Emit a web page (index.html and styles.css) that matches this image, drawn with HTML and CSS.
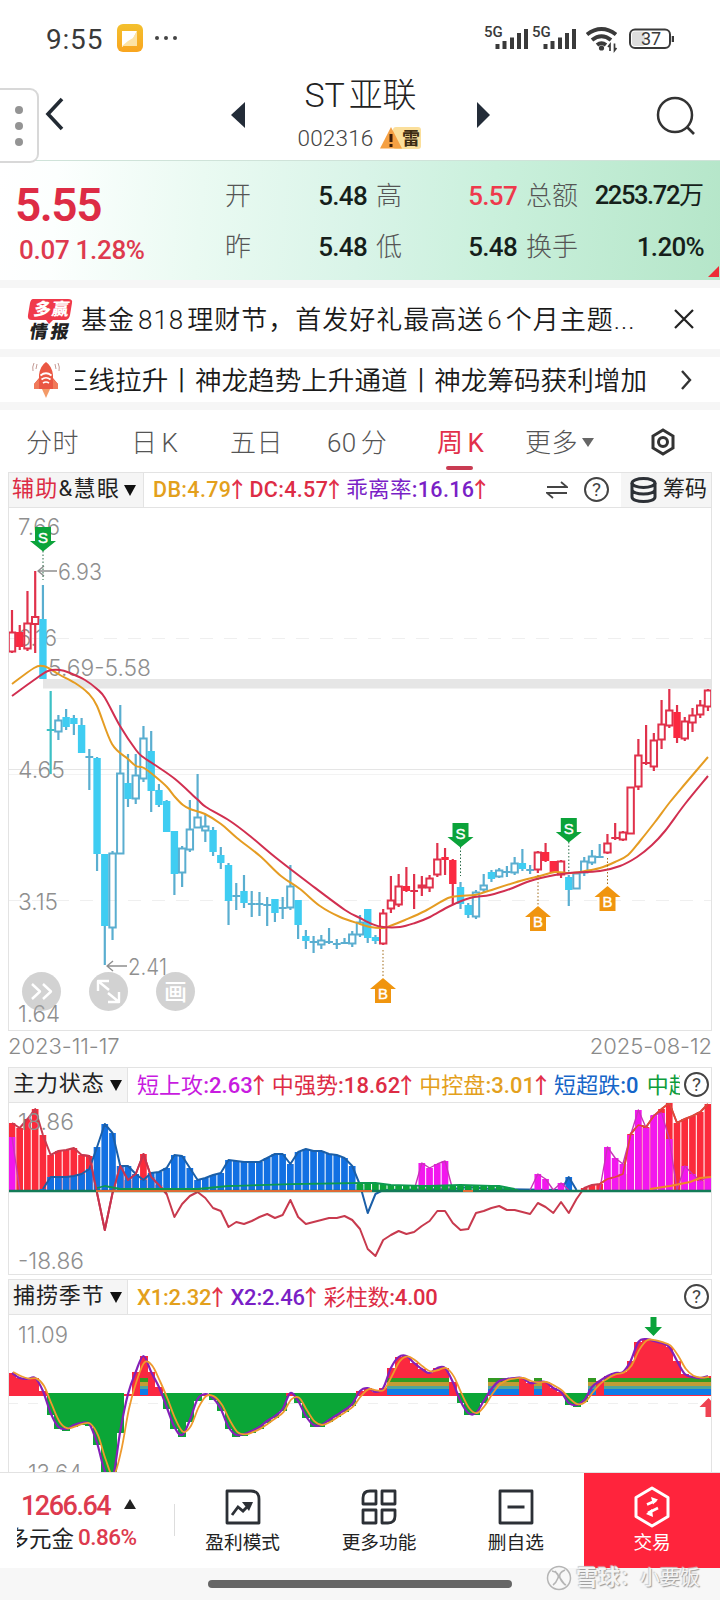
FILE: index.html
```html
<!DOCTYPE html>
<html lang="zh-CN">
<head>
<meta charset="utf-8">
<title>ST亚联 002316</title>
<link rel="stylesheet" href="styles.css">
</head>
<body>
<div class="screen">
  <div class="status">
    <span class="clock">9:55</span>
    <svg class="app-badge" width="26" height="28" viewBox="0 0 26 28"><defs><linearGradient id="ab" x1="0" y1="0" x2="0" y2="1"><stop offset="0" stop-color="#f3c02e"/><stop offset="1" stop-color="#f9a51f"/></linearGradient></defs><rect width="26" height="28" rx="6" fill="url(#ab)"/><path d="M5 7h15l-4 8-4 3-7 5z" fill="#fff"/><path d="M20 7v15H5l6-5 5-3z" fill="#fde3a4"/></svg>
    <span class="dots"><i></i><i></i><i></i></span>
    <svg class="sig" width="190" height="32" viewBox="484 22 190 32">
      <g fill="#3a3a3a"><text x="484" y="37" class="g5">5G</text><text x="532" y="37" class="g5">5G</text>
      <path d="M495.500 44h4v5h-4zM502.500 41h4v8h-4zM510 37.500h4v11.500h-4zM517 33h4v16h-4zM524 29h4v20h-4z"/>
      <path d="M543.500 44h4v5h-4zM550.500 41h4v8h-4zM558 37.500h4v11.500h-4zM565 33h4v16h-4zM572 29h4v20h-4z"/></g>
      <g fill="none" stroke="#3a3a3a" stroke-width="4"><path d="M587 34.500q14.500-11 29 0"/><path d="M592 40q9.500-7.500 19 0"/><path d="M597 45q4.500-3.500 9 0"/></g>
      <circle cx="601.500" cy="48" r="2.600" fill="#3a3a3a"/><path d="M610 51v-6.500l-2 2.500M614.500 43.500v7l2-2.500" fill="none" stroke="#3a3a3a" stroke-width="1.700"/>
      <rect x="630" y="29.500" width="40" height="18.500" rx="5" fill="#fff" stroke="#3a3a3a" stroke-width="2"/><rect x="632" y="31.500" width="13" height="14.500" rx="3" fill="#ddd"/><path d="M673 36v6" stroke="#3a3a3a" stroke-width="2.500"/>
      <text x="651" y="45" text-anchor="middle" class="bat">37</text>
    </svg>
  </div>

  <header class="head">
    <div class="side-tab"><i></i><i></i><i></i></div>
    <svg class="back" width="20" height="34" viewBox="0 0 20 34"><path d="M17 2L3 17l14 15" fill="none" stroke="#222a33" stroke-width="3.600"/></svg>
    <svg class="prev" width="14" height="26" viewBox="0 0 14 26"><path d="M14 0v26L0 13z" fill="#232c38"/></svg>
    <div class="name"><div class="title">ST<span>亚联</span></div>
      <div class="code"><span>002316</span><svg width="43" height="24" viewBox="0 0 43 24"><rect x="14" y="1" width="28" height="22" rx="3" fill="#fbdf9b"/><path d="M12 1L23 22.500H1z" fill="#f5a043"/><path d="M12 8v8M12 18v3" stroke="#3b1c08" stroke-width="3"/><text x="23" y="18.500" class="lei">雷</text></svg></div></div>
    <svg class="next" width="14" height="26" viewBox="0 0 14 26"><path d="M0 0v26l13-13z" fill="#232c38"/></svg>
    <svg class="search" width="42" height="42" viewBox="0 0 42 42"><circle cx="19" cy="19" r="17" fill="none" stroke="#333" stroke-width="2.500"/><path d="M31 31l7 7" stroke="#333" stroke-width="2.700"/></svg>
  </header>

  <section class="quote">
    <div class="price"><b>5.55</b><span>0.07 1.28%</span></div>
    <div class="stats">
      <em>开</em><b>5.48</b><em>高</em><b class="up">5.57</b><em>总额</em><b class="wide">2253.72<u>万</u></b>
      <em>昨</em><b>5.48</b><em>低</em><b>5.48</b><em>换手</em><b>1.20%</b>
    </div>
    <div class="corner"></div>
  </section>

  <div class="notice ad">
    <svg width="47" height="44" viewBox="26 294 47 44"><path d="M33 296h35q5 0 4 4l-2 12q-1 5-5 5H53l-4 4-3-4H32q-5 0-4-5l2-12q1-4 3-4z" fill="#f0394b"/><g transform="translate(57 0) skewX(-10)"><text x="31" y="312.500" class="lg1" textLength="35">多赢</text><text x="31" y="335.500" class="lg2" textLength="39">情报</text></g></svg>
    <div class="txt">基金<u>818</u>理财节，首发好礼最高送<u>6</u>个月主题...</div>
    <svg width="20" height="20" viewBox="0 0 20 20"><path d="M1 1l18 18M19 1L1 19" stroke="#222" stroke-width="2.200"/></svg>
  </div>
  <div class="notice strat">
    <svg width="28" height="36" viewBox="0 0 28 36"><path d="M14 0q6 4 7 13v3l5 6v5h-6H8H2v-5l5-6v-3q1-9 7-13z" fill="#ea5743"/><path d="M2 22l5-5v10H2zM26 22l-5-5v10h5z" fill="#f07a5a"/><path d="M10 27h8l-4 9z" fill="#f39a68"/><path d="M8.500 13.500q5.500-4.500 11 0M9.500 17.500q4.500-3.500 9 0M11 21q3-2 6 0" fill="none" stroke="#fff" stroke-width="1.700"/><path d="M2 1q-2 4-1 8M26 1q2 4 1 8M5 2l-1 5M23 2l1 5" stroke="#c49a94" fill="none"/></svg>
    <div class="txt clip"><span>三线拉升丨神龙趋势上升通道丨神龙筹码获利增加</span></div>
    <svg width="12" height="20" viewBox="0 0 12 20"><path d="M2 1l8 9-8 9" fill="none" stroke="#333" stroke-width="2.400"/></svg>
  </div>

  <nav class="tabs">
    <span>分时</span><span>日<u>K</u></span><span>五日</span><span>60<u>分</u></span><span class="on">周<u>K</u></span><span>更多<i></i></span>
    <svg width="26" height="28" viewBox="0 0 26 28"><path d="M13 2l10 6v12l-10 6-10-6V8z" fill="none" stroke="#333" stroke-width="3"/><circle cx="13" cy="14" r="4.500" fill="none" stroke="#333" stroke-width="3"/></svg>
  </nav>

  <main class="charts">
    <div class="bar b1">
      <div class="pick"><span class="r">辅助</span>&amp;慧眼<i></i></div>
      <div class="vals"><span class="o">DB:4.79<s>↑</s></span><span class="r">DC:4.57<s>↑</s></span><span class="p"><u>乖离率</u>:16.16<s>↑</s></span></div>
      <svg class="swap" width="22" height="18" viewBox="0 0 22 18"><path d="M1 6h20l-6-5M21 12H1l6 5" fill="none" stroke="#444" stroke-width="1.800"/></svg>
      <span class="help">?</span>
      <div class="chips"><svg width="27" height="26" viewBox="0 0 27 26"><g fill="none" stroke="#2c3036" stroke-width="3"><ellipse cx="13.500" cy="6" rx="11.500" ry="4.500"/><path d="M2 6v14c0 6 23 6 23 0V6M2 12.500c0 6 23 6 23 0"/></g></svg><span>筹码</span></div>
    </div>
    <svg id="kline" width="704" height="523" viewBox="8 508 704 523"></svg>
    <div class="dates"><span>2023-11-17</span><span>2025-08-12</span></div>
    <div class="bar b2">
      <div class="pick"><span>主力状态</span><i></i></div>
      <div class="vals"><span class="m"><u>短上攻</u>:2.63<s>↑</s></span><span class="r"><u>中强势</u>:18.62<s>↑</s></span><span class="o"><u>中控盘</u>:3.01<s>↑</s></span><span class="b"><u>短超跌</u>:0</span><span class="g"><u>中超</u></span></div>
      <span class="help">?</span>
    </div>
    <svg id="force" width="704" height="172" viewBox="8 1102 704 172"></svg>
    <div class="bar b3">
      <div class="pick"><span>捕捞季节</span><i></i></div>
      <div class="vals"><span class="o">X1:2.32<s>↑</s></span><span class="p">X2:2.46<s>↑</s></span><span class="r"><u>彩柱数</u>:4.00</span></div>
      <span class="help">?</span>
    </div>
    <svg id="season" width="704" height="158" viewBox="8 1314 704 158"></svg>
  </main>

  <footer class="foot">
    <div class="index"><div><b>1266.64</b><i></i></div><div class="ix"><span><u>多元金</u></span><em>0.86%</em></div></div>
    <div class="act"><svg width="36" height="36" viewBox="0 0 36 36"><path d="M2 2h24q8 0 8 8v24H2z" fill="none" stroke="#2c3036" stroke-width="2.800" stroke-linejoin="round"/><path d="M7 26l6-8 5 4 6-6" fill="none" stroke="#2c3036" stroke-width="2.800"/><path d="M17 13h11l-4 9z" fill="#2c3036"/></svg>盈利模式</div>
    <div class="act"><svg width="36" height="36" viewBox="0 0 36 36"><g fill="none" stroke="#2c3036" stroke-width="2.800" stroke-linejoin="round"><path d="M15 2v13H2v-6q0-7 7-7zM21 2h13v13H21zM2 21h13v13H2zM21 21h13v6q0 7-7 7h-6z"/></g></svg>更多功能</div>
    <div class="act"><svg width="36" height="36" viewBox="0 0 36 36"><path d="M2 2h32v32H2zM9.500 18h17" fill="none" stroke="#2c3036" stroke-width="2.800" stroke-linejoin="round"/></svg>删自选</div>
    <div class="trade"><svg width="38" height="42" viewBox="0 0 38 42"><path d="M19 2l16 9.500v19L19 40 3 30.500v-19z" fill="none" stroke="#fff" stroke-width="3" stroke-linejoin="round"/><path d="M14 18.500l9-4M25 22l-10 5" fill="none" stroke="#fff" stroke-width="2.600"/><path d="M18 11l7 2.500-5 5zM20 31l-7-3 6-5z" fill="#fff"/></svg>交易</div>
  </footer>
  <div class="home"><i></i>
    <div class="mark"><svg width="26" height="26" viewBox="0 0 26 26"><circle cx="13" cy="13" r="11.500" fill="#f8f8f8" stroke="#b5b5b5" stroke-width="1.500"/><path d="M6 6q8 2 6 7t-5 7M19 5q-7 3-5 8t6 7M9 6l10 14" fill="none" stroke="#b5b5b5" stroke-width="1.600"/></svg><b>雪球</b><span>：小要饭</span></div>
  </div>
</div>
<script src="charts.js"></script>
</body>
</html>
```

FILE: styles.css
```css
* { box-sizing: border-box; }
body { margin: 0; background: #fff; font-family: Roboto, "Noto Sans CJK SC", sans-serif; color: #222; }
i, em { font-style: normal; }
s, u { text-decoration: none; }
svg { display: block; flex: none; }
.screen { width: 720px; height: 1600px; overflow: hidden; display: flex; flex-direction: column; }
.screen > * { flex: none; }

.status { height: 76px; padding: 0 46px; display: flex; align-items: center; }
.clock { font-size: 28px; width: 71px; color: #3a3a3a; letter-spacing: .8px; margin-top: 2px; }
.dots { display: flex; gap: 5px; margin-left: 12px; }
.dots i { width: 4px; height: 4px; border-radius: 50%; background: #444; }
.sig { margin-left: auto; }
.g5 { font: 500 15px Roboto; }
.bat { font: 400 18px Roboto; fill: #3a3a3a; }

.head { height: 84px; display: flex; align-items: flex-start; position: relative; }
.side-tab { width: 39px; height: 75px; margin-top: 12px; border: 2px solid #d8d8d8; border-left: 0; border-radius: 0 9px 9px 0; display: flex; flex-direction: column; align-items: center; justify-content: center; gap: 8px; position: relative; z-index: 2; background: #fff; }
.side-tab i { width: 8px; height: 8px; border-radius: 50%; background: #949494; }
.back { margin: 21px 0 0 6px; }
.prev { margin: 26px 0 0 166px; }
.name { width: 232px; display: flex; flex-direction: column; align-items: center; padding-right: 3px; }
.title { font-size: 34px; line-height: 40px; font-weight: 300; color: #222; margin: -1px 0 0 2px; display: flex; gap: 4px; letter-spacing: -.1px; }
.code { display: flex; align-items: center; margin-top: 11px; height: 24px; gap: 5px; font-size: 22.500px; color: #444; font-weight: 300; letter-spacing: .2px; }
.lei { font: 700 18px "Noto Sans CJK SC"; fill: #3d2b12; letter-spacing: 0; }
.next { margin-top: 26px; }
.search { margin: 20px 0 0 165px; }

.quote { height: 120px; position: relative; display: flex; background: linear-gradient(95deg, #fff 0, #fcfffe 8%, #eafaf2 28%, #d9f4e8 50%, #caf0dc 68%, #b5e6c9 100%); border-top: 1px solid #cfe3d9; }
.price { width: 225px; padding: 18px 0 0 15px; color: #dd2c45; }
.price b { display: block; font-size: 46px; line-height: 52px; letter-spacing: -1.500px; font-weight: 600; }
.price span { display: block; margin: 3px 0 0 4px; font-size: 26px; line-height: 32px; font-weight: 500; letter-spacing: -.3px; color: #de3a4e; }
.stats { width: 479px; display: grid; grid-template-columns: 60px 82px 60px 90px 62px 125px; grid-template-rows: 51px 51px; align-items: center; margin-top: 9px; height: 102px; }
.stats em { font-size: 26px; font-weight: 300; color: #555; line-height: 30px; padding-left: 9px; white-space: nowrap; }
.stats em:nth-of-type(6n+1), .stats em:nth-of-type(6n+4) { padding-left: 0; }
.stats b { font-size: 26px; font-weight: 500; text-align: right; line-height: 30px; letter-spacing: -.7px; color: #161f1b; }
.stats .wide { font-size: 25.500px; letter-spacing: -1.400px; }
.stats b u { font-weight: 400; font-size: 25px; letter-spacing: 0; }
.stats .up { color: #ee3a4c; }
.corner { position: absolute; right: 1px; bottom: 3px; border-left: 11px solid transparent; border-bottom: 11px solid #ee2b36; }

.notice { display: flex; align-items: center; border-top: 8px solid #f6f6f6; }
.ad { height: 69px; padding: 0 26px; }
.strat { height: 53px; padding: 0 28px 0 32px; }
.notice .txt { flex: 1; font-size: 26px; line-height: 38px; white-space: nowrap; color: #1a1a1a; font-weight: 350; padding-top: 2px; }
.ad .txt { margin-left: 8px; letter-spacing: 1px; }
.ad u { margin: 0 3px; }
.lg1 { font: 900 17px "Noto Sans CJK SC"; fill: #fff; }
.lg2 { font: 900 18px "Noto Sans CJK SC"; fill: #222; }
.clip { margin: 0 33px 0 15px; overflow: hidden; display: flex; justify-content: flex-end; }
.clip span { font-size: 26.600px; }

.tabs { height: 70px; border-top: 8px solid #f6f6f6; display: grid; grid-template-columns: 105px 99px 97px 110px 88px 125px 40px; padding-left: 26px; font-size: 26px; line-height: 38px; font-weight: 300; color: #555; align-items: start; letter-spacing: .4px; }
.tabs > span { padding-top: 14px; height: 60px; white-space: nowrap; }
.tabs u { margin-left: 4px; }
.tabs > svg { margin-top: 18px; }
.tabs .on { color: #e2304a; font-weight: 400; }
.on::after { content: ""; display: block; width: 27px; height: 4px; border-radius: 2px; background: #c93b52; margin: 4px 0 0 9px; }
.tabs i { display: inline-block; border: 6px solid transparent; border-top: 9px solid #666; border-bottom: 0; margin-left: 4px; vertical-align: 5px; }

.charts { width: 704px; margin-left: 8px; height: 1000px; overflow: hidden; }
.bar { display: flex; align-items: center; border: 1px solid #e3e3e3; font-size: 22px; height: 36px; line-height: 32px; overflow: hidden; white-space: nowrap; }
.pick { height: 100%; background: #f5f5f5; border-right: 1px solid #e3e3e3; display: flex; align-items: center; padding: 0 0 2px 4px; width: 119px; flex: none; letter-spacing: .9px; }
.b1 .pick { width: 135px; padding-left: 3px; letter-spacing: 1.300px; }
.pick i { border: 6.500px solid transparent; border-top: 11px solid #111; border-bottom: 0; margin: 2px 0 0 5px; }
.b1 .pick i { margin-left: 4px; }
.vals { flex: 1; display: flex; align-items: baseline; gap: 8px; padding: 0 0 2px 9px; overflow: hidden; letter-spacing: .05px; }
.b1 .vals { font-size: 21.500px; letter-spacing: .35px; }
.vals s { color: #e2304a; font-family: "Noto Sans CJK SC"; display: inline-block; width: 11px; text-indent: -5px; }
.b1 .vals s { width: 10px; }
.b2 .vals { margin-right: 4px; }
.b3 { margin-top: 4px; }
.b3 .vals { letter-spacing: -.2px; }
.r { color: #dd2c45; } .o { color: #e3a01c; } .p { color: #7a1fc6; } .m { color: #c81be0; } .b { color: #1565c8; } .g { color: #0d9c3c; }
.vals span { font-weight: 500; flex: none; }
.vals u { font-weight: 400; }
.help { width: 25px; height: 25px; border: 2px solid #444; border-radius: 50%; text-align: center; font: 400 19px/21px Roboto; color: #444; flex: none; margin: -1px 2px 0 0; }
.swap { margin-right: 16px; }
.chips { width: 90px; height: 100%; margin-left: 10px; background: #f5f5f5; display: flex; align-items: center; gap: 6px; padding-left: 9px; flex: none; }
.chips span { padding-bottom: 2px; }
.dates { height: 36px; display: flex; justify-content: space-between; font: 300 22px/31px Inter; color: #8a8a8a; letter-spacing: -.05px; }
.axis { font: 300 22.500px Inter; fill: #8f8f8f; }
.tag { font: 400 15px "Liberation Sans"; fill: #fff; stroke: #fff; stroke-width: .4px; text-anchor: middle; }
.glyph { font: 500 23px "Noto Sans CJK SC"; fill: #fff; text-anchor: middle; }

.foot { height: 96px; border-top: 1px solid #e2e2e2; display: flex; font-size: 18.700px; }
.index { width: 175px; padding: 17px 0 0 17px; position: relative; white-space: nowrap; }
.index::after { content: ""; position: absolute; right: 0; top: 31px; width: 1px; height: 32px; background: #ddd; }
.index div { display: flex; align-items: center; height: 32px; }
.index b { font-size: 27px; font-weight: 500; color: #dd3a4e; margin-left: 4px; letter-spacing: -1.500px; width: 103px; }
.index i { border: 6px solid transparent; border-bottom: 10px solid #222; border-top: 0; margin-bottom: 4px; }
.ix span { width: 57px; overflow: hidden; display: flex; justify-content: flex-end; font-size: 22.500px; line-height: 32px; }
.ix u { flex: none; }
.index .ix em { color: #dd3a4e; font-size: 22.500px; font-weight: 500; margin: -2px 0 0 4px; letter-spacing: -.5px; }
.ix span { margin-top: 2px; }
.act, .trade { display: flex; flex-direction: column; align-items: center; line-height: 28px; width: 137px; padding-top: 16px; }
.act svg { margin-bottom: 4px; }
.act:nth-child(2) { width: 136px; }
.trade { width: 136px; background: #ff243c; color: #fff; padding-top: 13px; }
.trade svg { margin-bottom: 1px; }
.home { height: 32px; background: #f7f7f7; position: relative; }
.home > i { position: absolute; left: 208px; top: 12px; width: 304px; height: 8px; border-radius: 4px; background: #666; }
.mark { position: absolute; left: 546px; top: -6px; display: flex; align-items: center; gap: 4px; font-size: 20px; line-height: 32px; color: #f4f4f4; text-shadow: 1px 1px 1px #999, -1px -1px 1px #ccc; white-space: nowrap; }
.mark b { font-size: 22px; }
.mark span { margin-left: -4px; }
```

FILE: charts.js
```js
const STEP = 7.733;
const X = i => 12 + STEP * i;
const RED = '#e0314b', RFILL = '#fb2840', BLUE = '#5aaed0', BFILL = '#3fcdf2';
const rect = (x, y, w, h, f) => `<rect x="${x}" y="${y}" width="${w}" height="${h}" fill="${f}"/>`;
const text = (x, y, t, w, c = 'axis') => `<text x="${x}" y="${y}" class="${c}"${w ? ` textLength="${w}" lengthAdjust="spacingAndGlyphs"` : ''}>${t}</text>`;

function smooth(p) {
  let d = `M${p[0][0]} ${p[0][1]}`;
  for (let i = 0; i < p.length - 1; i++) {
    const a = p[i - 1] || p[i], b = p[i], c = p[i + 1], e = p[i + 2] || c;
    d += `C${b[0] + (c[0] - a[0]) / 6} ${b[1] + (c[1] - a[1]) / 6} ${c[0] - (e[0] - b[0]) / 6} ${c[1] - (e[1] - b[1]) / 6} ${c[0]} ${c[1]}`;
  }
  return d;
}
const stroke = (d, c, w = 2) => `<path d="${d}" fill="none" stroke="${c}" stroke-width="${w}" stroke-linejoin="round"/>`;
const frame = (y, h) => `<rect x="8.500" y="${y}" width="703" height="${h}" fill="none" stroke="#e3e3e3"/>`;
const pairs = s => s.split(' ').map(v => v.split(',').map(Number));

/* kind, high, body top, body bottom, low; r/b hollow, R/B solid, x/y cross */
const candles = `r 610 632 652 653;R 625 632 647 650;r 591 623 649 651;r 571 616.5 624.5 653;B 585 619 679 679;y 691 730 730 774;b 715 720 732 740;B 709 717 727 730;B 715 718 724 735;B 718 725 753 753;y 749 757 757 790;B 757 758 854 871;B 854 854 926 965;b 851 853 928 940;b 705 773 854 854;B 754 783 799 807;b 754 775 799 804;b 726 738 779 782;B 731 751 791 812;B 784 790 805 807;B 800 801 832 832;B 831 831 874 895;b 846 848 873 887;b 800 829 850 852;b 774 817 828 828;b 815 826 831 842;B 827 830 852 856;B 847 855 863 869;B 863 865 901 925;y 883 896 896 910;B 875 891 903 908;y 891 904 904 917;y 892 904 904 916;y 897 905 905 926;B 899 899 913 922;y 897 908 908 919;b 865 886 908 910;B 900 900 925 939;B 930 936 941 949;y 936 942 942 953;b 935 940 945 949;y 928 942 942 944;y 939 944 944 949;y 938 943 943 944;b 931 934 944 947;b 915 922 935 937;B 909 909 938 943;B 935 937 941 944;r 909 913 944 945;r 876 900 909 913;r 874 886 905 907;R 867 886 891 892;x 874 891 891 909;r 876 885 888 896;r 875 878 888 892;r 843 859 875 877;R 848 857 860 875;R 859 860 884 904;B 882 887 904 909;B 903 905 915 918;b 890 892 917 919;b 874 885 890 893;B 870 872 879 882;b 868 870 877 878;y 866 872 872 877;b 857 863 873 875;B 849 863 869 871;y 865 870 870 874;r 851 852 870 873;R 843 852 861 862;R 861 861 873 873;r 860 861 875 878;B 875 877 890 906;b 872 873 889 889;b 857 861 873 876;b 850 856 863 865;y 844 857 857 858;r 834 843 853 854;x 823 838 838 840;r 831 832 840 841;r 787 787 834 834;r 739 755 787 790;x 725 763 763 765;r 733 740 767 771;r 700 724 740 749;r 689 710 726 728;R 705 712 738 743;r 717 721 739 741;r 708 715 723 732;r 700 705 715 718;r 689 690 707 711`.split(';').map(v => v.split(' '));

function drawKline() {
  let s = `<path d="M8 638.500H711M8 900.500H711" stroke="#efefef" stroke-dasharray="13 11"/><path d="M8 769.500H711" stroke="#e5e5e5"/><path d="M8 774.500H711" stroke="#f3f3f3"/>`;
  s += text(18, 535, '7.66', 42) + text(18, 646, '6.16', 39) + text(48, 675.5, '5.69-5.58', 103) + text(18, 777.5, '4.65', 47) + text(18, 910, '3.15', 40) + text(18, 1022, '1.64', 42) + text(58, 580, '6.93', 44) + text(128, 974.5, '2.41', 39);
  s += rect(43, 679, 668, 9.5, '#e6e6e6');
  candles.forEach(([k, h, t, b, l], i) => {
    [h, t, b, l] = [h, t, b, l].map(Number);
    const red = 'rRx'.includes(k), c = red ? RED : BLUE, f = red ? RFILL : BFILL, x = X(i);
    if (k === 'r' || k === 'b') {
      s += stroke(`M${x} ${h}V${t}M${x} ${b}V${l}`, c, 2.2) + `<rect x="${x - 3.2}" y="${t + .5}" width="6.400" height="${Math.max(1, b - t - 1)}" fill="none" stroke="${c}" stroke-width="2"/>`;
    } else if (k === 'R' || k === 'B') {
      s += stroke(`M${x} ${h}V${l}`, c, 2.2) + rect(x - 3.7, t, 7.4, b - t, f);
    } else {
      s += stroke(`M${x} ${h}V${l}M${x - 3.9} ${t}h7.800`, i === 5 ? '#3cc0c5' : c, 2.2);
    }
  });
  s += stroke(smooth(pairs('12,684 34,668 43,666 50,669 60,675 75,683 88,693 97,706 112,744 128,759 136,766 144,768 157,778 167,787 175,797 183,805 190,809 205,814 221,824 237,838 260,856 281,876 300,889 320,906 340,917 360,924 370,927 383,928 390,926 405,920 425,911 448,898 460,896 475,895 485,892 520,881 540,876 555,872 570,873 585,871 600,868 615,862 628,855 640,841 655,822 670,802 685,784 708,757')), '#e59c22');
  s += stroke(smooth(pairs('12,696 34,680 48,671 60,670 70,673 85,680 97,689 105,698 120,726 136,750 143,757 155,765 175,779 197,799 206,807 230,821 250,836 275,857 310,884 345,910 360,918 372,924 383,927 400,927 415,923 430,917 450,906 470,898 490,895 510,889 530,881 555,875 570,873 600,871 620,866 637,857 652,845 665,831 685,804 708,776')), '#d12f50');
  s += stroke('M57 571H38M44 566l-6 5 6 5M127 966H107M113 961l-6 5 6 5', '#8f8f8f', 1.4);
  [[43, 527, 551, 580], [460.5, 823, 847, 876], [568.8, 818, 842, 872]].forEach(([x, y, a, b]) => {
    s += `<path d="M${x} ${a}V${b}" stroke="#2a6b48" stroke-dasharray="1.500 2"/><path d="M${x - 8} ${y}h16v14h5l-13 10.500-13-10.500h5z" fill="#0ba33a"/>` + text(x, y + 16, 'S', 0, 'tag');
  });
  [[383, 978, 950], [538, 906, 875], [607.5, 886, 858]].forEach(([x, y, a]) => {
    s += `<path d="M${x} ${a}V${y}" stroke="#a06a18" stroke-dasharray="1.500 2"/><path d="M${x - 8} ${y + 25}h16v-14h5l-13-11-13 11h5z" fill="#f0950f"/>` + text(x, y + 20.5, 'B', 0, 'tag');
  });
  [41.5, 108.5, 175.5].forEach(x => { s += `<circle cx="${x}" cy="991.500" r="19.500" fill="#a9a9a9" opacity=".52"/>`; });
  s += stroke('M32 984l8 7.500-8 7.500M43 984l8 7.500-8 7.500', '#fff', 2.4);
  s += stroke('M98 991V981h11M98 981l11 9M119 992v10h-11M119 1002l-11-9', '#fff', 2.4) + text(175.5, 1000, '画', 0, 'glyph');
  document.getElementById('kline').innerHTML = s + frame(507.5, 523);
}

const ys = (from, str) => str.split(' ').map((v, k) => [from + k, Number(v)]);
const line = a => 'M' + a.map(([i, y]) => `${X(i)} ${y}`).join('L');
const fill = a => a.slice(0, -1).flatMap(([i, y], k) => {
  const [j, v] = a[k + 1];
  return Array.from({ length: j - i }, (_, n) => [i + n, y + (v - y) * n / (j - i)]);
});

function drawForce() {
  const z = 1189.5;
  const red = ys(0, '1122 1127 1118 1108 1134 1154 1150 1149 1147 1154 1155 1192 1229 1192 1165 1179 1173 1153 1176 1184 1193 1216 1203 1195 1191 1197 1207 1210 1226 1221 1223 1220 1216 1213 1217 1214 1199 1216 1223 1221 1219 1217 1217 1215 1219 1228 1248 1255 1239 1234 1230 1233 1231 1225 1220 1210 1210 1222 1229 1228 1212 1210 1207 1205 1209 1209 1211 1213 1202 1206 1212 1201 1212 1198 1187 1184 1183 1178 1176 1173 1133 1124 1126 1115 1108 1102 1122 1118 1115 1111 1103');
  const blue = ys(4, '1188 1176 1176 1176 1175 1173 1168 1146 1123 1132 1165 1165 1173 1179 1172 1171 1167 1154 1155 1167 1179 1177 1174 1172 1159 1160 1161 1161 1161 1157 1153 1153 1163 1151 1148 1150 1150 1153 1154 1157 1165 1184 1212 1193 1189').concat([[57, 1188], [59, 1186], [62, 1188], [71, 1189], [72, 1176], [73, 1189]]);
  const mags = [ys(0, '1136 1189'), ys(52, '1189 1162 1167 1163 1160 1189'), ys(67, '1189 1173 1178 1189 1182 1189'), ys(76, '1189 1146 1157 1163 1134 1109 1127 1114 1112 1138 1189 1165 1173 1180 1176')];
  const green = fill([[11, 1187], [12, 1185], [14, 1188], [24, 1188], [28, 1185], [37, 1183], [45, 1182], [47, 1182], [49, 1184], [54, 1185], [58, 1184], [63, 1185], [65, 1188], [66, 1189]]);
  const bars = (a, c) => a.filter(([, y]) => y < z - .7).map(([i, y]) => rect(X(i) - 3.4, y, 6.7, z - y, c)).join('');
  let s = '<defs><clipPath id="fc"><rect x="8.500" y="1102" width="702.500" height="172"/></clipPath></defs><g clip-path="url(#fc)">';
  s += bars(red, '#fb2b3b') + stroke(line(red), '#c83a4e');
  s += bars(blue, '#1270e2') + stroke(line(blue), '#1b5fa8');
  mags.forEach(m => { s += bars(m, '#f217ee') + stroke(line(m), '#c933b8', 1.4); });
  s += stroke(line(red.slice(9, 21)), '#c9334e') + stroke(line(red.slice(76)), '#e34a35', 1.6);
  s += bars(green.filter(([i]) => i > 44), '#0ba33a') + stroke(line(green), '#0c9a50', 1.8);
  s += stroke('M8 1190H711', '#137b58', 2.4) + stroke('M96 1190H372M463 1190h10', '#de6b36', 1.8);
  s += stroke('M650 1188L670 1185 690 1181 700 1177 711 1176', '#f18a25', 2) + '</g>';
  s += text(18, 1129, '18.86', 56) + text(18, 1267.5, '-18.86', 66);
  document.getElementById('force').innerHTML = s + frame(1101.5, 172);
}

function drawSeason() {
  const z = 1393.5;
  const p = ys(0, '1372 1377 1378 1377 1390 1412 1426 1428 1424 1422 1423 1442 1470 1478 1430 1393 1371 1355 1371 1386 1406 1426 1434 1419 1398 1393 1397 1408 1426 1434 1433 1430 1426 1420 1415 1408 1392 1400 1415 1424 1424 1419 1414 1409 1403 1390 1387 1391 1387 1367 1356 1355 1362 1368 1372 1367 1367 1381 1400 1412 1412 1400 1388 1380 1378 1377 1377 1382 1381 1381 1387 1391 1402 1404 1399 1386 1380 1375 1372 1371 1360 1341 1338 1340 1342 1346 1360 1373 1376 1377 1375');
  let s = '<defs><clipPath id="sc"><rect x="8.500" y="1314" width="702.500" height="158"/></clipPath></defs><g clip-path="url(#sc)">';
  s += stroke('M8 1402.500H711', '#efefef', 1).replace('/>', ' stroke-dasharray="10 10"/>') + '<g shape-rendering="crispEdges">';
  p.forEach(([i, y]) => { s += y < z ? rect(X(i) - 3.9, y - .5, 8, z - y + 1.5, '#fb2840') : rect(X(i) - 3.9, 1392, 8, y - 1390, '#0ba637'); });
  const banded = i => i === 17 || i === 68 || i === 75 || (i > 48 && i < 57) || (i > 61 && i < 66) || i > 76;
  p.filter(([i]) => banded(i)).forEach(([i]) => {
    const x = X(i) - 3.9;
    s += rect(x, 1377, 8, 5, '#329a23') + rect(x, 1381, 8, 5, '#c29c35') + rect(x, 1385, 8, 4, '#4fa59a') + rect(x, 1388, 8, 6, '#0d7be8');
  });
  s += '</g>';
  const o = p.map(([i, y], k) => [X(i) + 1, k ? y * .6 + p[k - 1][1] * .4 : y - 1]);
  s += stroke(smooth(p.map(([i, y]) => [X(i), y])), '#8420b8', 2.2) + stroke(smooth(o), '#ee9a2d', 1.8);
  s += '<path d="M650.500 1316h6v10h5.500l-8.500 9-9-9h6z" fill="#0ba33a"/><path d="M705.500 1416h6v-10h5l-8-9-9 9h6z" fill="#ef4352"/></g>';
  s += text(18, 1341.5, '11.09', 50) + text(18, 1480, '-13.64', 64);
  document.getElementById('season').innerHTML = s + frame(1313.5, 170);
}

drawKline();
drawForce();
drawSeason();
```
